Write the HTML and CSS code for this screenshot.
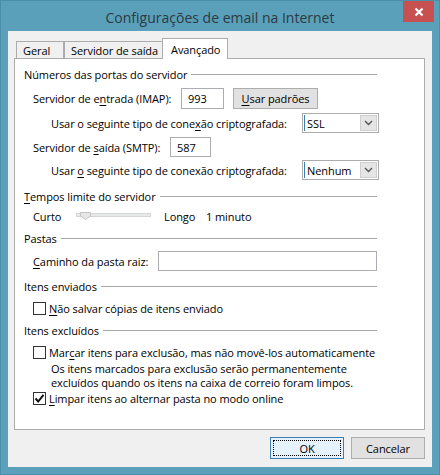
FILE: index.html
```html
<!DOCTYPE html>
<html lang="pt">
<head>
<meta charset="utf-8">
<title>Configurações de email na Internet</title>
<link rel="stylesheet" href="styles.css">
</head>
<body>
<div class="window">
  <div class="titlebar">
    <span class="title">Configurações de email na Internet</span>
    <div class="close">
      <svg width="10" height="10" viewBox="0 0 10 10"><path d="M1.5 1.5 L8.5 8.5 M8.5 1.5 L1.5 8.5" stroke="#fff" stroke-width="2.2"/></svg>
    </div>
  </div>
  <div class="client">
    <div class="tabs">
      <div class="tab tab-geral">Geral</div>
      <div class="tab tab-saida">Servidor de saída</div>
      <div class="tab tab-active">Avançado</div>
    </div>
    <div class="panel">
      <div class="group">
        <span class="group-title">Números das portas do servidor</span><span class="group-line"></span>
      </div>
      <div class="row row-imap">
        <span class="label lbl-imap">Servidor de e<u>n</u>trada (IMAP):</span>
        <span class="textbox port-in">993</span>
        <span class="button defaults"><u>U</u>sar padrões</span>
      </div>
      <div class="row row-ssl">
        <span class="label">Usar o seguinte tipo de cone<u>x</u>ão criptografada:</span>
        <span class="select"><span class="select-value">SSL</span><span class="select-arrow"><svg width="9" height="6" viewBox="0 0 9 6"><path d="M1 1 L4.5 4.5 L8 1" fill="none" stroke="#555" stroke-width="1.4"/></svg></span></span>
      </div>
      <div class="row row-smtp">
        <span class="label lbl-smtp">Servidor de <u>s</u>aída (SMTP):</span>
        <span class="textbox port-out">587</span>
      </div>
      <div class="row row-nenhum">
        <span class="label">Usar <u>o</u> seguinte tipo de conexão criptografada:</span>
        <span class="select"><span class="select-value">Nenhum</span><span class="select-arrow"><svg width="9" height="6" viewBox="0 0 9 6"><path d="M1 1 L4.5 4.5 L8 1" fill="none" stroke="#555" stroke-width="1.4"/></svg></span></span>
      </div>

      <div class="group g-tempos">
        <span class="group-title"><u>T</u>empos limite do servidor</span><span class="group-line"></span>
      </div>
      <div class="row row-slider">
        <span class="label short">Curto</span>
        <span class="slider">
          <span class="track"></span>
          <svg class="thumb" width="11" height="8" viewBox="0 0 11 8"><path d="M0.5 0.5 H10.5 V4 L5.5 7.5 L0.5 4 Z" fill="#e6e6e6" stroke="#c4c4c4"/></svg>
        </span>
        <span class="label long">Longo</span>
        <span class="label">1 minuto</span>
      </div>

      <div class="group g-pastas">
        <span class="group-title">Pastas</span><span class="group-line"></span>
      </div>
      <div class="row row-path">
        <span class="label lbl-path"><u>C</u>aminho da pasta raiz:</span>
        <span class="textbox path"></span>
      </div>

      <div class="group g-enviados">
        <span class="group-title">Itens enviados</span><span class="group-line"></span>
      </div>
      <div class="row check-row cb-1">
        <span class="checkbox"></span>
        <span class="label"><u>N</u>ão salvar cópias de itens enviado</span>
      </div>

      <div class="group g-excluidos">
        <span class="group-title">Itens excluídos</span><span class="group-line"></span>
      </div>
      <div class="row check-row cb-2">
        <span class="checkbox"></span>
        <span class="label">Mar<u>c</u>ar itens para exclusão, mas não movê-los automaticamente</span>
      </div>
      <div class="desc">
        <div>Os itens marcados para exclusão serão permanentemente</div>
        <div>excluídos quando os itens na caixa de correio foram limpos.</div>
      </div>
      <div class="row check-row cb-3">
        <span class="checkbox checked"><svg width="11" height="11" viewBox="0 0 11 11"><path d="M1.5 5.5 L4.2 8.5 L9.5 1.8" fill="none" stroke="#111" stroke-width="2"/></svg></span>
        <span class="label"><u>L</u>impar itens ao alternar pasta no modo online</span>
      </div>
    </div>
    <div class="buttons">
      <span class="button dlg ok"><span class="focus">OK</span></span>
      <span class="button dlg">Cancelar</span>
    </div>
  </div>
</div>
</body>
</html>
```
FILE: styles.css
```css
* { box-sizing: border-box; }
html, body { margin: 0; padding: 0; }
body {
  width: 440px;
  height: 475px;
  overflow: hidden;
  font-family: "Open Sans", "Noto Sans", sans-serif;
  font-size: 11px;
  letter-spacing: -0.08px;
  color: #000;
}
u { text-decoration: underline; text-underline-offset: 2px; text-decoration-thickness: 1px; }

.window {
  width: 440px;
  height: 475px;
  background: #5aa0bb;
  border: 1px solid #4a8ea9;
  padding: 0 7px 7px 7px;
  position: relative;
  display: flex;
  flex-direction: column;
}
.titlebar {
  height: 30px;
  display: flex;
  align-items: center;
  justify-content: center;
}
.title {
  font-size: 14px;
  letter-spacing: 0;
  color: #2d3a40;
  padding-top: 2px;
}
.close {
  position: absolute;
  top: 0;
  left: 402px;
  width: 31px;
  height: 21px;
  background: #c75050;
  display: flex;
  align-items: center;
  justify-content: center;
}

.client {
  flex: 1;
  background: #f0f0f0;
  padding-top: 7px;
  display: flex;
  flex-direction: column;
}

.tabs {
  height: 20px;
  margin-left: 8px;
  display: flex;
  align-items: flex-end;
  position: relative;
  z-index: 1;
}
.tab {
  height: 17px;
  border: 1px solid #acacac;
  border-bottom: none;
  background: #f0f0f0;
  display: flex;
  align-items: center;
  padding-left: 6px;
  padding-top: 1px;
}
.tab-geral { width: 48px; }
.tab-saida { width: 100px; }
.tab-active {
  width: 66px;
  height: 21px;
  margin-left: -2px;
  margin-bottom: -1px;
  background: #fff;
  padding-left: 8px;
  padding-top: 0;
}

.panel {
  width: 411px;
  height: 372px;
  margin-left: 6px;
  background: #fff;
  border: 1px solid #acacac;
  padding: 7px 47px 0 9px;
  display: flex;
  flex-direction: column;
}

.group {
  height: 16px;
  display: flex;
  align-items: center;
}
.group-line {
  flex: 1;
  height: 1px;
  background: #a7a7a7;
  margin-left: 4px;
}
.g-tempos { margin-top: 8px; }
.g-pastas { margin-top: 6px; }
.g-enviados { margin-top: 7px; }
.g-excluidos { margin-top: 6px; }

.row {
  display: flex;
  align-items: center;
  white-space: nowrap;
}
.row-imap { height: 21px; margin-top: 6px; padding-left: 9px; }
.row-ssl { height: 20px; margin-top: 4px; padding-left: 27px; }
.row-smtp { height: 20px; margin-top: 4px; padding-left: 9px; }
.row-nenhum { height: 20px; margin-top: 3px; padding-left: 27px; }
.row-slider { height: 16px; margin-top: 4px; padding-left: 9px; }
.row-path { height: 20px; margin-top: 5px; padding-left: 9px; }
.check-row { height: 16px; padding-left: 9px; }
.cb-1 { margin-top: 6px; }
.cb-2 { margin-top: 6px; }
.cb-3 { margin-top: 2px; }

.lbl-imap { width: 148px; }
.lbl-smtp { width: 137px; }
.lbl-path { width: 126px; }

.textbox {
  height: 100%;
  border: 1px solid #abadb3;
  background: #fff;
  display: flex;
  align-items: center;
  padding-left: 6px;
}
.port-in { width: 43px; }
.port-out { width: 41px; }
.path { width: 221px; height: 20px; }

.button {
  display: flex;
  align-items: center;
  justify-content: center;
  background: #e1e1e1;
  border: 1px solid #adadad;
}
.defaults { width: 85px; height: 21px; margin-left: 9px; }

.select {
  width: 77px;
  height: 100%;
  margin-left: auto;
  margin-right: -2px;
  border: 1px solid #acacac;
  background: #fff;
  display: flex;
  align-items: stretch;
  padding: 1px;
}
.select-value {
  flex: 1;
  border-left: 1px solid #3c7fb1;
  padding-left: 2px;
  display: flex;
  align-items: center;
}
.select-arrow {
  width: 17px;
  background: #e5e5e5;
  border: 1px solid #cfcfcf;
  display: flex;
  align-items: center;
  justify-content: center;
}

.short { width: 43px; }
.slider {
  position: relative;
  width: 75px;
  height: 16px;
  display: block;
}
.track {
  position: absolute;
  left: 0;
  right: 0;
  top: 5px;
  height: 4px;
  background: #e7eaea;
  border: 1px solid #d6d6d6;
}
.thumb {
  position: absolute;
  left: 4px;
  top: 4px;
}
.long { margin-left: 13px; width: 42px; }

.checkbox {
  width: 13px;
  height: 13px;
  border: 1px solid #333;
  background: #fff;
  margin-right: 3px;
  display: flex;
  align-items: center;
  justify-content: center;
  flex: none;
}
.desc {
  margin-top: 2px;
  padding-left: 27px;
  line-height: 14px;
  white-space: nowrap;
}
.desc + .cb-3 { margin-top: 0; }

.buttons {
  display: flex;
  justify-content: flex-end;
  gap: 7px;
  margin-top: 7px;
  margin-right: 7px;
}
.dlg { width: 74px; height: 22px; }
.ok {
  background: #e5f1fb;
  border-color: #3c7fb1;
  padding: 2px;
}
.focus {
  width: 100%;
  height: 100%;
  border: 1px dotted #000;
  display: flex;
  align-items: center;
  justify-content: center;
}
```
